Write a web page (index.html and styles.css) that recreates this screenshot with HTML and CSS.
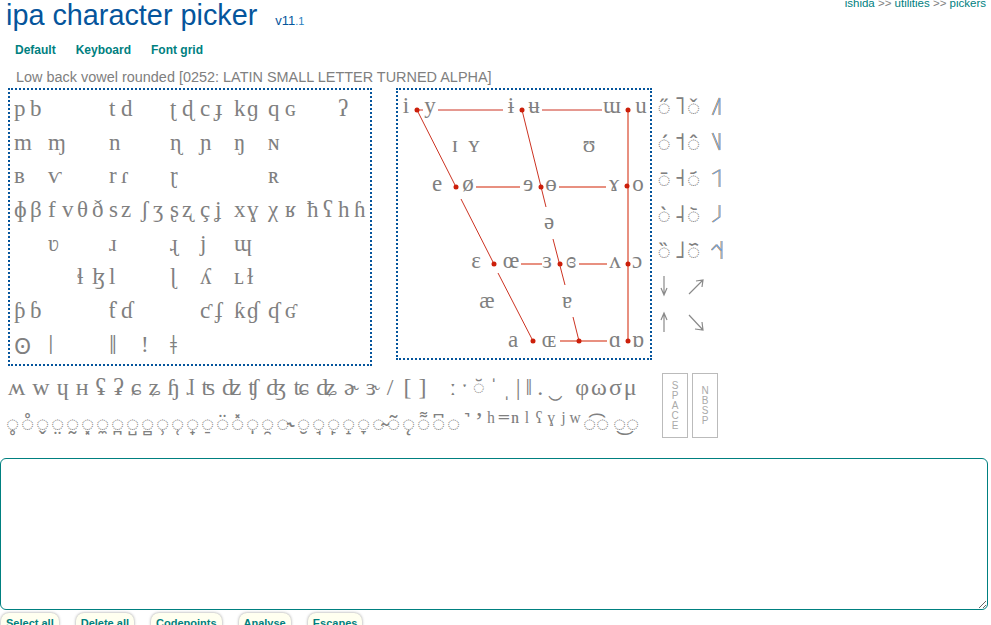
FILE: index.html
```html
<!DOCTYPE html>
<html>
<head>
    <meta charset="utf-8">
    <title>ipa character picker</title>
    <link rel="stylesheet" href="styles.css">
</head>
<body>
    <div class="top">
        <h1>ipa character picker <span class="version">v11<small>.1</small></span></h1>
        <div class="crumbs"><a>ishida</a> &gt;&gt; <a>utilities</a> &gt;&gt; <a>pickers</a></div>
    </div>
    <div class="nav"><a>Default</a><a>Keyboard</a><a>Font grid</a></div>
    <div class="info">Low back vowel rounded [0252: LATIN SMALL LETTER TURNED ALPHA]</div>

    <div class="charts">
        <div class="panel consonants">
            <span>p</span><span>b</span><span></span><span></span><span></span><span></span><span>t</span><span>d</span><span></span><span></span><span>ʈ</span><span>ɖ</span><span>c</span><span>ɟ</span><span>k</span><span>ɡ</span><span>q</span><span>ɢ</span><span></span><span></span><span>ʔ</span><span></span>
            <span>m</span><span></span><span>ɱ</span><span></span><span></span><span></span><span>n</span><span></span><span></span><span></span><span>ɳ</span><span></span><span>ɲ</span><span></span><span>ŋ</span><span></span><span>ɴ</span><span></span><span></span><span></span><span></span><span></span>
            <span>ʙ</span><span></span><span>ⱱ</span><span></span><span></span><span></span><span>r</span><span>ɾ</span><span></span><span></span><span>ɽ</span><span></span><span></span><span></span><span></span><span></span><span>ʀ</span><span></span><span></span><span></span><span></span><span></span>
            <span>ɸ</span><span>β</span><span>f</span><span>v</span><span>θ</span><span>ð</span><span>s</span><span>z</span><span>ʃ</span><span>ʒ</span><span>ʂ</span><span>ʐ</span><span>ç</span><span>ʝ</span><span>x</span><span>ɣ</span><span>χ</span><span>ʁ</span><span>ħ</span><span>ʕ</span><span>h</span><span>ɦ</span>
            <span></span><span></span><span>ʋ</span><span></span><span></span><span></span><span>ɹ</span><span></span><span></span><span></span><span>ɻ</span><span></span><span>j</span><span></span><span>ɰ</span><span></span><span></span><span></span><span></span><span></span><span></span><span></span>
            <span></span><span></span><span></span><span></span><span>ɬ</span><span>ɮ</span><span>l</span><span></span><span></span><span></span><span>ɭ</span><span></span><span>ʎ</span><span></span><span>ʟ</span><span>ɫ</span><span></span><span></span><span></span><span></span><span></span><span></span>
            <span>ƥ</span><span>ɓ</span><span></span><span></span><span></span><span></span><span>ƭ</span><span>ɗ</span><span></span><span></span><span></span><span></span><span>ƈ</span><span>ʄ</span><span>ƙ</span><span>ɠ</span><span>ʠ</span><span>ʛ</span><span></span><span></span><span></span><span></span>
            <span class="bullseye">ʘ</span><span></span><span class="click">ǀ</span><span></span><span></span><span></span><span class="click">ǁ</span><span></span><span>ǃ</span><span></span><span class="click">ǂ</span><span></span><span></span><span></span><span></span><span></span><span></span><span></span><span></span><span></span><span></span><span></span>
        </div>

        <div class="panel vowels">
            <svg viewBox="398 90 252 268" width="252" height="268">
                <g class="thin">
                    <path d="M417 110 L456 187 M461 199 L494 264 M498 273 L533 341"/>
                    <path d="M522 110 L546 207 M553 239 L565 285 M573 317 L579 341"/>
                    <path d="M438 110 H503 M542 110 H602 M417 110 H423"/>
                </g>
                <g class="thick">
                    <path d="M476 187 H520 M559 187 H606"/>
                    <path d="M521 264 H542 M579 264 H607"/>
                    <path d="M560 341 H607 M628 110 V341"/>
                </g>
                <g class="dots">
                    <circle cx="417" cy="110" r="2.5"/><circle cx="522" cy="110" r="2.5"/><circle cx="628" cy="110" r="2.5"/>
                    <circle cx="456" cy="187" r="2.5"/><circle cx="541" cy="187" r="2.5"/><circle cx="627" cy="186" r="2.5"/>
                    <circle cx="494" cy="264" r="2.5"/><circle cx="560" cy="264" r="2.5"/><circle cx="628" cy="264" r="2.5"/>
                    <circle cx="533" cy="341" r="2.5"/><circle cx="579" cy="341" r="2.5"/><circle cx="628" cy="341" r="2.5"/>
                </g>
                <g class="vowel-text">
                    <text x="406" y="113">i</text><text x="430" y="113">y</text><text x="511" y="113">ɨ</text><text x="534" y="113">ʉ</text><text x="612" y="113">ɯ</text><text x="641" y="113">u</text>
                    <text x="455" y="152">ɪ</text><text x="474" y="152">ʏ</text><text x="589" y="152">ʊ</text>
                    <text x="437" y="191">e</text><text x="468" y="191">ø</text><text x="528" y="191">ɘ</text><text x="551" y="191">ɵ</text><text x="614" y="191">ɤ</text><text x="638" y="191">o</text>
                    <text x="549" y="229">ə</text>
                    <text x="476" y="268">ɛ</text><text x="511" y="268">œ</text><text x="547" y="268">ɜ</text><text x="571" y="268">ɞ</text><text x="615" y="268">ʌ</text><text x="637" y="268">ɔ</text>
                    <text x="487" y="308">æ</text><text x="567" y="308">ɐ</text>
                    <text x="513" y="347">a</text><text x="549" y="347">ɶ</text><text x="615" y="347">ɑ</text><text x="638" y="347">ɒ</text>
                </g>
            </svg>
        </div>

        <div class="tones">
            <span>◌̋</span><span class="bar">˥</span><span>◌̌</span>
            <svg class="contour" viewBox="0 0 12 20"><polyline class="fringe-a" points="1,19 8,2 8,19"/><polyline class="fringe-b" points="2,19 9,2 9,19"/></svg>
            <span>◌́</span><span class="bar">˦</span><span>◌̂</span>
            <svg class="contour" viewBox="0 0 12 20"><polyline class="fringe-a" points="1,1 8,18 8,1"/><polyline class="fringe-b" points="2,1 9,18 9,1"/></svg>
            <span>◌̄</span><span class="bar">˧</span><span>◌᷄</span>
            <svg class="contour" viewBox="0 0 12 20"><polyline class="fringe-a" points="1,6 8,2 8,19"/><polyline class="fringe-b" points="2,6 9,2 9,19"/></svg>
            <span>◌̀</span><span class="bar">˨</span><span>◌᷅</span>
            <svg class="contour" viewBox="0 0 12 20"><polyline class="fringe-a" points="1,18 8,13 8,1"/><polyline class="fringe-b" points="2,18 9,13 9,1"/></svg>
            <span>◌̏</span><span class="bar">˩</span><span>◌᷈</span>
            <svg class="contour" viewBox="0 0 12 20"><polyline class="fringe-a" points="0,10 5,5 10,11 10,1 10,19"/><polyline class="fringe-b" points="1,10 6,5 11,11 11,1 11,19"/></svg>
            <svg class="arrow" viewBox="0 0 18 24"><path d="M9 2 V21 M6 14 L9 21 L12 14"/></svg><span></span>
            <svg class="arrow" viewBox="0 0 18 24"><path d="M2 20 L16 6 M9 7 L16 6 L15 13"/></svg><span></span>
            <svg class="arrow" viewBox="0 0 18 24"><path d="M9 22 V3 M6 10 L9 3 L12 10"/></svg><span></span>
            <svg class="arrow" viewBox="0 0 18 24"><path d="M2 5 L16 20 M15 12 L16 20 L8 19"/></svg><span></span>
        </div>
    </div>

    <div class="extras">
        <div class="extra-rows">
            <div class="row-one">
                <span>ʍ</span><span>w</span><span>ɥ</span><span>ʜ</span><span>ʢ</span><span>ʡ</span><span>ɕ</span><span>ʑ</span><span>ɧ</span><span>ɺ</span><span>ʦ</span><span>ʣ</span><span>ʧ</span><span>ʤ</span><span>ʨ</span><span>ʥ</span><span>ɚ</span><span>ɝ</span><span>/</span><span class="bracket">[</span><span>]</span>
                <div class="marks">
                    <span>ː</span><span>ˑ</span><span class="breve">◌̆</span><span>ˈ</span><span>ˌ</span><span>|</span><span>‖</span><span>.</span><span>‿</span>
                </div>
                <span class="greek">φωσμ</span>
            </div>
            <div class="row-two">
                <span>◌̥</span><span>◌̊</span><span>◌̬</span><span>◌̤</span><span>◌̰</span><span>◌͓</span><span>◌̼</span><span>◌̪</span><span>◌̺</span><span>◌̻</span><span>◌̹</span><span>◌̜</span><span>◌̟</span><span>◌̠</span><span>◌̈</span><span>◌̽</span><span>◌̩</span><span>◌̯</span><span class="rhotic">◌˞</span><span>◌̮</span><span>◌̘</span><span>◌̙</span><span>◌̝</span><span>◌̞</span><span>◌̴</span><span>◌̃</span><span>◌̨</span><span>◌͌</span><span>◌͆</span><span>◌</span>
                <span class="mod">˺</span><span class="mod">ʼ</span><span class="mod">ʰ</span><span class="mod">⁼</span><span class="mod">ⁿ</span><span class="mod">ˡ</span><span class="mod">ˤ</span><span class="mod">ˠ</span><span class="mod">ʲ</span><span class="mod">ʷ</span>
                <span class="tie">◌͡◌</span><span class="tie">◌͜◌</span>
            </div>
        </div>
        <div class="space-btn">S<br>P<br>A<br>C<br>E</div>
        <div class="space-btn">N<br>B<br>S<br>P</div>
    </div>

    <textarea class="output"></textarea>

    <div class="buttons">
        <button>Select all</button>
        <button>Delete all</button>
        <button>Codepoints</button>
        <button>Analyse</button>
        <button>Escapes</button>
    </div>
</body>
</html>
```

FILE: styles.css
```css
body {
    margin: 0;
    font-family: "Liberation Sans", Arial, sans-serif;
    color: #808080;
    background: white;
    overflow: hidden;
}

a {
    color: #008080;
}

.top {
    display: flex;
    justify-content: space-between;
    height: 35px;
}

h1 {
    margin: 0 0 0 6px;
    font-size: 28.8px;
    line-height: 30px;
    font-weight: normal;
    color: #05559c;
}

.version {
    margin-left: 10px;
    font-size: 13px;
}

.version small {
    font-size: 11px;
    color: #2a7fc0;
}

.crumbs {
    margin: -3px 5px 0 0;
    font-size: 11.5px;
    line-height: 13px;
}

.nav {
    display: flex;
    gap: 20px;
    margin: 8px 0 0 15px;
    font-size: 12px;
    line-height: 14px;
    font-weight: bold;
}

.info {
    margin: 12px 0 0 16px;
    font-size: 14.45px;
    line-height: 16px;
}

.charts {
    display: flex;
    align-items: flex-start;
    margin: 3px 0 0 8px;
}

.panel {
    border: 2px dotted #05559c;
}

.consonants {
    display: grid;
    grid-template-columns: 16px 18px 14px 15px 15px 17px 12px 20px 12px 17px 12px 18px 15px 19px 13px 21px 17px 22px 16px 15px 16px 14px;
    grid-auto-rows: 33.7px;
    width: 356px;
    height: 272px;
    padding: 2px 0 0 4px;
    margin-right: 24px;
    font-family: "Liberation Serif", "DejaVu Serif", serif;
    font-size: 23px;
    line-height: 34px;
    color: #808080;
}

.consonants .click {
    font-size: 28px;
    font-weight: normal;
}

.consonants .bullseye {
    font-family: "Noto Sans", "DejaVu Sans", sans-serif;
    font-size: 22px;
}

.vowels {
    width: 252px;
    height: 268px;
    margin-right: 3px;
}

.vowels svg {
    display: block;
}

.thin path {
    fill: none;
    stroke: #cc3322;
    stroke-width: 1;
}

.thick path {
    fill: none;
    stroke: #e89080;
    stroke-width: 2;
}

.dots circle {
    fill: #cc1f0a;
}

.vowel-text text {
    font-family: "Liberation Serif", "DejaVu Serif", serif;
    font-size: 23px;
    fill: #808080;
    text-anchor: middle;
}

.tones {
    display: grid;
    grid-template-columns: 18px 14px 13px 26px;
    grid-auto-rows: 36px;
    font-family: "Noto Sans", "DejaVu Sans", sans-serif;
    font-size: 22px;
    line-height: 36px;
    color: #808080;
    text-align: center;
}

.tones .bar {
    font-family: "DejaVu Sans", sans-serif;
    font-size: 24px;
}

.arrow {
    width: 18px;
    height: 24px;
    margin-top: 6px;
}

.arrow path {
    fill: none;
    stroke: #8a8a8a;
    stroke-width: 1.2;
}

.contour {
    width: 12px;
    height: 20px;
    margin: 8px 0 0 11px;
}

.contour polyline {
    fill: none;
    stroke-width: 1.2;
}

.fringe-a {
    stroke: #d9a066;
}

.fringe-b {
    stroke: #6f9fd8;
}

.extras {
    display: flex;
    margin: 6px 0 0 5px;
    height: 72px;
}

.extra-rows {
    width: 657px;
    color: #808080;
    font-family: "Liberation Serif", "DejaVu Serif", serif;
}

.row-one {
    display: flex;
    gap: 7px;
    padding-left: 3px;
    font-size: 24px;
    line-height: 30px;
}

.bracket {
    margin-left: 3px;
}

.marks {
    display: flex;
    gap: 5px;
    margin-left: 16px;
}

.greek {
    margin-left: 5px;
    letter-spacing: 2px;
}

.breve {
    font-family: "Noto Sans", sans-serif;
    font-size: 20px;
}

.row-two {
    display: flex;
    margin-top: 5px;
    font-family: "Noto Sans", "DejaVu Sans", sans-serif;
    font-size: 22px;
    line-height: 30px;
}

.row-two span {
    width: 15px;
    text-align: center;
}

.row-two .rhotic {
    width: 21px;
}

.row-two .mod {
    width: 12px;
    font-size: 26px;
    font-family: "Liberation Serif", "DejaVu Serif", serif;
}

.row-two .tie {
    width: 30px;
}

.space-btn {
    display: flex;
    align-items: center;
    justify-content: center;
    width: 24px;
    height: 63px;
    margin: 1px 4px 0 0;
    border: 1px solid #bbb;
    font-size: 10px;
    line-height: 10px;
    color: #aaa;
    text-align: center;
}

.output {
    display: block;
    box-sizing: border-box;
    width: 988px;
    height: 152px;
    margin-top: 14px;
    border: 1px solid #008080;
    border-radius: 6px;
    outline: none;
}

.buttons {
    display: flex;
    gap: 17px;
    margin: 3px 0 0 1px;
}

.buttons button {
    padding: 4px 5px;
    background: #fffff0;
    border: none;
    border-radius: 8px;
    box-shadow: 0 0 3px #999;
    font-family: "Liberation Sans", Arial, sans-serif;
    font-size: 11px;
    font-weight: bold;
    color: #008080;
}
```
